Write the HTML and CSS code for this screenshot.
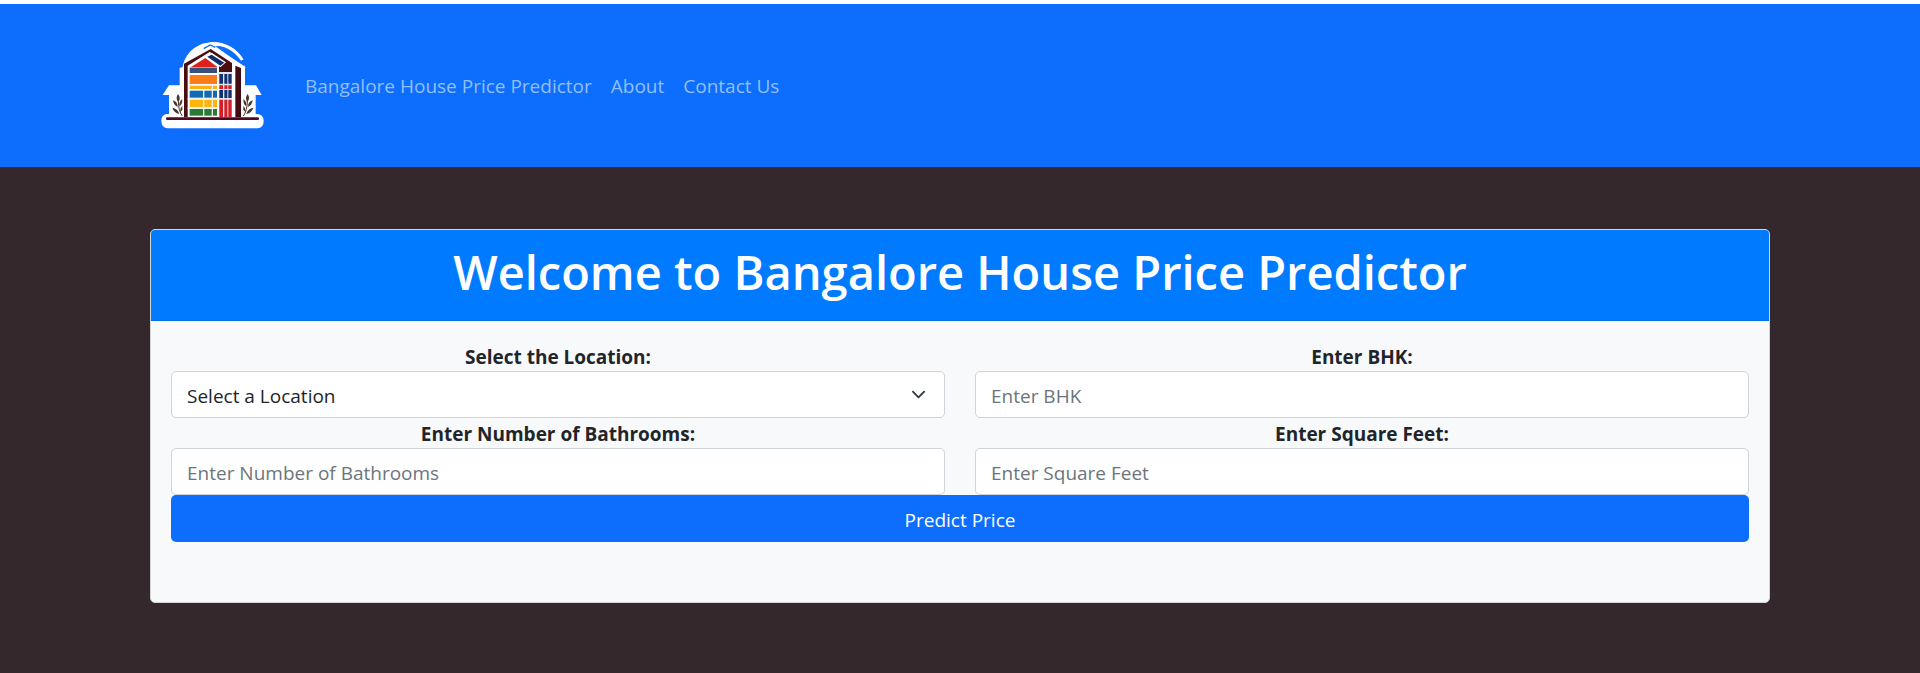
FILE: index.html
```html
<!DOCTYPE html>
<html lang="en">
<head>
<meta charset="utf-8">
<title>Bangalore House Price Predictor</title>
<link rel="stylesheet" href="styles.css">
</head>
<body>
<header class="navbar">
  <nav class="container nav">
    <a class="brand" href="#" aria-label="Home">
      <svg class="logo" viewBox="0 0 390 330" aria-hidden="true">
        <path d="M34 272Q34 254 50 252L57 252V195H38L57 166H89V114L98 111C104 74 136 38 186 37C232 37 264 60 280 89L272 94L230 66L285 108V166H318L335 195H317V252L326 253Q341 256 341 273Q341 294 322 295H53Q34 293 34 272Z" fill="#fff"/>
        <path d="M196 49L284 112L280 84Q236 42 196 49Z" fill="#0d6efd"/>
        <path d="M180 41Q240 38 277 90" fill="none" stroke="#fff" stroke-width="9"/>
        <path d="M160 58L182 47L285 114" fill="none" stroke="#fff" stroke-width="7"/>
        <path d="M161 56L181 45L196 52" fill="none" stroke="#0d6efd" stroke-width="4"/>
        <path d="M102 262V101L182 57L246 99V262Z" fill="#490d12"/>
        <path d="M113 262V107L180 65L207 99V262Z" fill="#fff"/>
        <path d="M172 74L185 68L228 97L211 112Z" fill="#fff"/>
        <path d="M122 112L166 84L203 112Z" fill="#dc211c"/>
        <path d="M172 80L185 74L223 98L211 107Z" fill="#0e2d69"/>
        <path d="M119 113H201V129H119Z" fill="#385078"/>
        <path d="M119 135H201V162H119Z" fill="#fb7d19"/>
        <path d="M119 167H201V177H119Z" fill="#ffae13"/>
        <path d="M119 182H201V203H119Z" fill="#116ab3"/>
        <path d="M119 209H201V231H119Z" fill="#ffb60c"/>
        <path d="M119 237H201V257H119Z" fill="#297a32"/>
        <path d="M161 180V259M187 165V259M113 206H204M113 234H204" stroke="#eee" stroke-width="4"/>
        <path d="M206 126H247V262H206Z" fill="#e2e4ea"/>
        <path d="M208 132H219V161H208ZM223 132H232V161H223ZM235 132H245V161H235ZM208 180H219V204H208ZM223 180H232V204H223ZM235 180H245V204H235Z" fill="#12306f"/>
        <path d="M208 166H219V177H208ZM223 166H232V177H223ZM235 166H245V177H235ZM208 209H219V261H208ZM223 209H232V261H223ZM235 209H245V261H235Z" fill="#d51d25"/>
        <path d="M246 98L256 106V262H246Z" fill="#fff"/>
        <path d="M256 107L273 114V262H256Z" fill="#430c10"/>
        <path d="M52 266H323" stroke="#4a0c24" stroke-width="8" stroke-linecap="round"/>
        <g id="plant" fill="#49362b">
          <path d="M84 192Q94 204 85 217Q75 205 84 192M69 211Q83 215 83 231Q70 225 69 211M67 233Q83 235 88 252Q71 248 67 233M97 207Q97 225 88 229Q86 216 97 207M97 228V240L91 246Q89 235 97 228"/>
          <path d="M85 213Q85 242 97 258" fill="none" stroke="#49362b" stroke-width="3"/>
        </g>
        <use href="#plant" transform="translate(377 0) scale(-1 1)"/>
      </svg>
    </a>
    <div class="links">
      <a href="#">Bangalore House Price Predictor</a>
      <a href="#">About</a>
      <a href="#">Contact Us</a>
    </div>
  </nav>
</header>
<main class="container">
  <section class="card">
    <h1 class="title">Welcome to Bangalore House Price Predictor</h1>
    <form class="form">
      <div class="field">
        <label for="location">Select the Location:</label>
        <select id="location" class="control select"><option>Select a Location</option></select>
      </div>
      <div class="field">
        <label for="bhk">Enter BHK:</label>
        <input id="bhk" class="control" type="text" placeholder="Enter BHK">
      </div>
      <div class="field">
        <label for="bath">Enter Number of Bathrooms:</label>
        <input id="bath" class="control" type="text" placeholder="Enter Number of Bathrooms">
      </div>
      <div class="field">
        <label for="sqft">Enter Square Feet:</label>
        <input id="sqft" class="control" type="text" placeholder="Enter Square Feet">
      </div>
      <button class="submit" type="button">Predict Price</button>
    </form>
  </section>
</main>
</body>
</html>
```
FILE: styles.css
```css
* { box-sizing: border-box; }

body {
  margin: 0;
  background: #35282c;
  color: #212529;
  font-family: "Segoe UI", "Open Sans", "Noto Sans", sans-serif;
  font-size: 19px;
  line-height: 30px;
}

.container {
  max-width: 1620px;
  margin: 0 auto;
}

.navbar {
  background: #0d6efd;
  border-top: 4px solid #fff;
  padding: 26px 0 27px;
}

.nav {
  display: flex;
  align-items: center;
  gap: 25px;
}

.brand, .logo { display: block; }
.logo { width: 130px; height: 110px; }

.links { display: flex; gap: 19px; padding-top: 2px; }
.links a { color: #92bffe; text-decoration: none; }

.card {
  margin-top: 62px;
  border: 1px solid #d4d5d7;
  border-radius: 5px;
  background: #f8f9fa;
  overflow: hidden;
}

.title {
  margin: 0;
  padding: 12px 20px 18px;
  border-bottom: 1px solid #006fe6;
  background: #007bff;
  color: #fff;
  font-size: 47px;
  font-weight: 600;
  line-height: 60px;
  text-align: center;
}

.form {
  display: grid;
  grid-template-columns: 1fr 1fr;
  column-gap: 30px;
  padding: 20px 20px 60px;
}

.field {
  display: flex;
  flex-direction: column;
  text-align: center;
}

.field label {
  padding-top: 2px;
  font-weight: 700;
  line-height: 28px;
}

.control {
  width: 100%;
  height: 47px;
  padding: 2px 15px 0;
  border: 1px solid #ced4da;
  border-radius: 5px;
  background-color: #fff;
  color: #212529;
  font: inherit;
}

.control::placeholder { color: #6c757d; opacity: 1; }

.select {
  appearance: none;
  background-image: url("data:image/svg+xml,%3Csvg xmlns='http://www.w3.org/2000/svg' viewBox='0 0 16 16'%3E%3Cpath fill='none' stroke='%23343a40' stroke-linecap='round' stroke-linejoin='round' stroke-width='2' d='m2 5 6 6 6-6'/%3E%3C/svg%3E");
  background-repeat: no-repeat;
  background-position: right 18px center;
  background-size: 15px 15px;
}

.submit {
  grid-column: 1 / -1;
  height: 47px;
  padding: 2px 15px 0;
  border: 0;
  border-radius: 5px;
  background: #0d6efd;
  color: #fff;
  font: inherit;
}
```
